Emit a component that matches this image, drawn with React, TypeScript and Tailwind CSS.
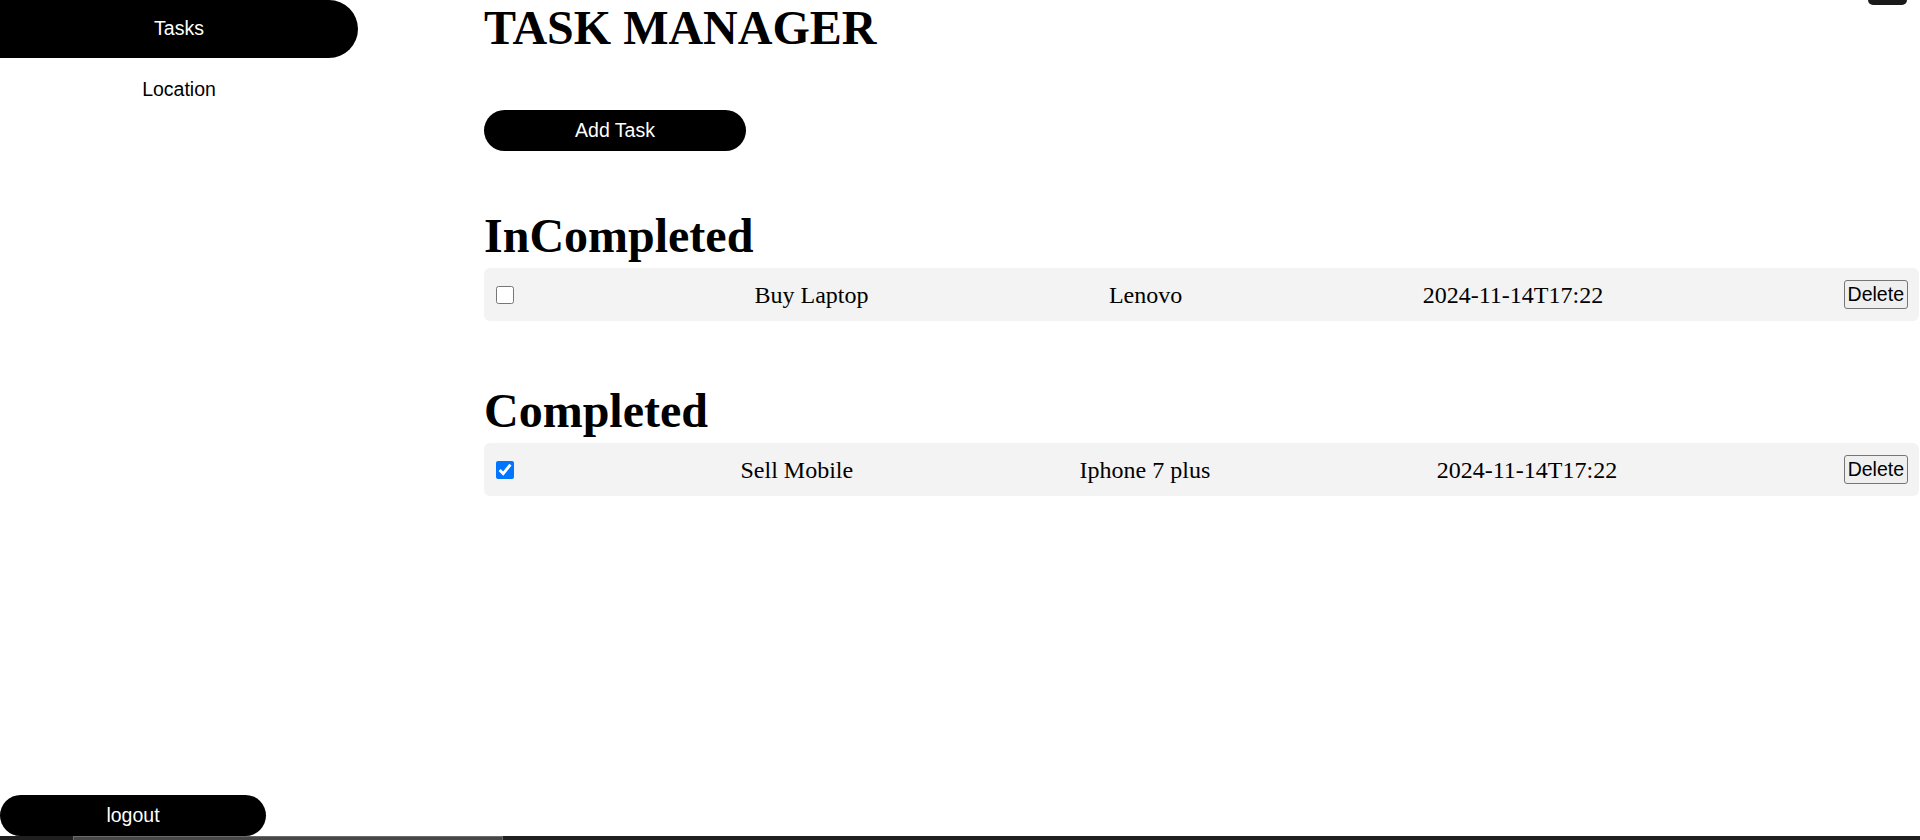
import React, { useState } from "react";

interface Task {
  id: number;
  title: string;
  description: string;
  date: string;
  completed: boolean;
}

const serif = "font-['Liberation_Serif','Times_New_Roman',serif]";
const sans = "font-['Liberation_Sans',Arial,sans-serif]";

const initialTasks: Task[] = [
  { id: 1, title: "Buy Laptop", description: "Lenovo", date: "2024-11-14T17:22", completed: false },
  { id: 2, title: "Sell Mobile", description: "Iphone 7 plus", date: "2024-11-14T17:22", completed: true },
];

const TaskRow: React.FC<{ task: Task; onToggle: () => void; onDelete: () => void }> = ({
  task,
  onToggle,
  onDelete,
}) => (
  <div
    className={`mt-[5px] flex h-[53px] items-center justify-between rounded-[6px] bg-[#f3f3f3] pl-[12px] pr-[11px] text-[24px] text-black ${serif}`}
  >
    <input
      type="checkbox"
      checked={task.completed}
      onChange={onToggle}
      aria-label={task.title}
      className="m-0 h-[18px] w-[18px] accent-[#0075ff]"
    />
    <span>{task.title}</span>
    <span>{task.description}</span>
    <span>{task.date}</span>
    <button
      onClick={onDelete}
      className={`h-[29px] rounded-[3px] border border-[#767676] bg-[#efefef] px-[3px] text-[19.5px] leading-[23px] text-black ${sans}`}
    >
      Delete
    </button>
  </div>
);

export default function App() {
  const [tasks, setTasks] = useState<Task[]>(initialTasks);

  const toggle = (id: number) =>
    setTasks((prev) => prev.map((t) => (t.id === id ? { ...t, completed: !t.completed } : t)));
  const remove = (id: number) => setTasks((prev) => prev.filter((t) => t.id !== id));

  const incompleted = tasks.filter((t) => !t.completed);
  const completed = tasks.filter((t) => t.completed);

  return (
    <div className="flex h-[840px] w-full flex-col overflow-hidden bg-white">
      <div className="flex min-h-0 flex-1">
        {/* Sidebar */}
        <aside className={`flex w-[358px] shrink-0 flex-col justify-between ${sans}`}>
          <nav className="flex flex-col">
            <a className="flex h-[58px] items-center justify-center rounded-r-full bg-black text-[19.5px] text-white">
              Tasks
            </a>
            <a className="mt-[3px] flex h-[57px] items-center justify-center text-[19.5px] text-black">
              Location
            </a>
          </nav>
          <button className="flex h-[41px] w-[266px] items-center justify-center rounded-full bg-black text-[19.5px] text-white">
            logout
          </button>
        </aside>

        {/* Main */}
        <main className="flex min-w-0 flex-1 flex-col pl-[126px] pr-[1px]">
          <div className="flex items-start justify-between">
            <h1 className={`m-0 text-[48px] font-bold leading-[55px] text-black ${serif}`}>TASK MANAGER</h1>
            <div className="mr-[12px] h-[5px] w-[39px] rounded-b-[8px] bg-[#1a1a1a]" />
          </div>

          <button
            className={`mt-[55px] flex h-[41px] w-[262px] items-center justify-center rounded-full bg-black text-[19.5px] text-white ${sans}`}
          >
            Add Task
          </button>

          <h2 className={`mt-[57px] text-[48px] font-bold leading-[55px] text-black ${serif}`}>InCompleted</h2>
          {incompleted.map((t) => (
            <TaskRow key={t.id} task={t} onToggle={() => toggle(t.id)} onDelete={() => remove(t.id)} />
          ))}

          <h2 className={`mt-[62px] text-[48px] font-bold leading-[55px] text-black ${serif}`}>Completed</h2>
          {completed.map((t) => (
            <TaskRow key={t.id} task={t} onToggle={() => toggle(t.id)} onDelete={() => remove(t.id)} />
          ))}
        </main>
      </div>

      {/* horizontal scrollbar strip */}
      <div className="flex h-[4px] shrink-0 bg-[#1f1f1f]">
        <div className="ml-[73px] h-full w-[430px] border-x border-t border-[#6a6a6a] bg-[#474747]" />
      </div>
    </div>
  );
}
